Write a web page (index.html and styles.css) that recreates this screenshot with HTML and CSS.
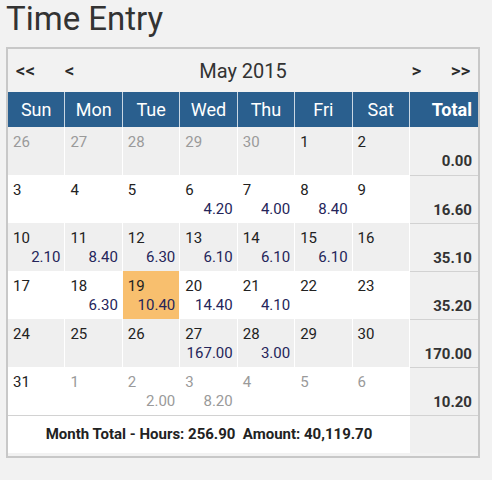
FILE: index.html
```html
<!DOCTYPE html>
<html>
<head>
<meta charset="utf-8">
<link rel="stylesheet" href="styles.css">
</head>
<body>
<h1 class="title">Time Entry</h1>
<div class="cal">
  <div class="nav">
    <span class="nav-btn nav-far">&lt;&lt;</span>
    <span class="nav-btn nav-near">&lt;</span>
    <span class="month">May 2015</span>
    <span class="nav-btn nav-near">&gt;</span>
    <span class="nav-btn nav-far">&gt;&gt;</span>
  </div>
  <div class="grid">
    <div class="hd">Sun</div><div class="hd">Mon</div><div class="hd">Tue</div><div class="hd">Wed</div><div class="hd">Thu</div><div class="hd">Fri</div><div class="hd">Sat</div><div class="hd hd-total">Total</div>

    <div class="cell gray other"><span class="d">26</span></div>
    <div class="cell gray other"><span class="d">27</span></div>
    <div class="cell gray other"><span class="d">28</span></div>
    <div class="cell gray other"><span class="d">29</span></div>
    <div class="cell gray other"><span class="d">30</span></div>
    <div class="cell gray"><span class="d">1</span></div>
    <div class="cell gray"><span class="d">2</span></div>
    <div class="tot first">0.00</div>

    <div class="cell"><span class="d">3</span></div>
    <div class="cell"><span class="d">4</span></div>
    <div class="cell"><span class="d">5</span></div>
    <div class="cell"><span class="d">6</span><span class="h">4.20</span></div>
    <div class="cell"><span class="d">7</span><span class="h">4.00</span></div>
    <div class="cell"><span class="d">8</span><span class="h">8.40</span></div>
    <div class="cell"><span class="d">9</span></div>
    <div class="tot">16.60</div>

    <div class="cell gray"><span class="d">10</span><span class="h">2.10</span></div>
    <div class="cell gray"><span class="d">11</span><span class="h">8.40</span></div>
    <div class="cell gray"><span class="d">12</span><span class="h">6.30</span></div>
    <div class="cell gray"><span class="d">13</span><span class="h">6.10</span></div>
    <div class="cell gray"><span class="d">14</span><span class="h">6.10</span></div>
    <div class="cell gray"><span class="d">15</span><span class="h">6.10</span></div>
    <div class="cell gray"><span class="d">16</span></div>
    <div class="tot">35.10</div>

    <div class="cell"><span class="d">17</span></div>
    <div class="cell"><span class="d">18</span><span class="h">6.30</span></div>
    <div class="cell today"><span class="d">19</span><span class="h">10.40</span></div>
    <div class="cell"><span class="d">20</span><span class="h">14.40</span></div>
    <div class="cell"><span class="d">21</span><span class="h">4.10</span></div>
    <div class="cell"><span class="d">22</span></div>
    <div class="cell"><span class="d">23</span></div>
    <div class="tot">35.20</div>

    <div class="cell gray"><span class="d">24</span></div>
    <div class="cell gray"><span class="d">25</span></div>
    <div class="cell gray"><span class="d">26</span></div>
    <div class="cell gray"><span class="d">27</span><span class="h">167.00</span></div>
    <div class="cell gray"><span class="d">28</span><span class="h">3.00</span></div>
    <div class="cell gray"><span class="d">29</span></div>
    <div class="cell gray"><span class="d">30</span></div>
    <div class="tot">170.00</div>

    <div class="cell"><span class="d">31</span></div>
    <div class="cell other"><span class="d">1</span></div>
    <div class="cell other"><span class="d">2</span><span class="h">2.00</span></div>
    <div class="cell other"><span class="d">3</span><span class="h">8.20</span></div>
    <div class="cell other"><span class="d">4</span></div>
    <div class="cell other"><span class="d">5</span></div>
    <div class="cell other"><span class="d">6</span></div>
    <div class="tot">10.20</div>

    <div class="foot">Month Total - Hours: 256.90&nbsp;&nbsp;Amount: 40,119.70</div>
    <div class="foot-tot"></div>
  </div>
</div>
</body>
</html>
```
FILE: styles.css
```css
html, body {
  margin: 0;
  background: #f2f2f2;
}
body {
  padding: 0 6px;
  font-family: Roboto, "Liberation Sans", sans-serif;
  color: #222;
}
.title {
  margin: 0;
  font-size: 33px;
  line-height: 38px;
  font-weight: 400;
  color: #333;
}
.cal {
  margin-top: 9px;
  width: 470px;
  border: 2px solid #c8c8c8;
  padding-bottom: 3px;
  background: #f2f2f2;
}
.nav {
  display: flex;
  align-items: center;
  height: 43px;
  color: #2a2a2a;
}
.nav-btn {
  text-align: center;
  font-size: 19px;
  font-weight: 500;
}
.nav-far { width: 35px; }
.nav-near { width: 53px; }
.month {
  flex: 1;
  text-align: center;
  font-size: 20px;
  color: #333;
}
.grid {
  display: grid;
  grid-template-columns: repeat(7, 1fr) 68px;
  grid-template-rows: 35px repeat(6, 48px) 38px;
}
.hd {
  background: #2a5f8e;
  color: #fff;
  font-size: 18px;
  line-height: 35px;
  text-align: center;
  border-right: 1px solid rgba(255,255,255,0.75);
}
.hd-total {
  border-right: 0;
  text-align: right;
  padding-right: 6px;
  font-weight: 700;
}
.cell {
  display: flex;
  flex-direction: column;
  padding: 6px 4px 0 5px;
  background: #fff;
  border-right: 1px solid #fff;
  font-size: 15px;
  line-height: 19px;
}
.cell.gray { background: #efefef; }
.cell.today { background: #f8bf6e; }
.d { color: #222; }
.h {
  align-self: flex-end;
  color: #25255a;
}
.other .d, .other .h { color: #9a9a9a; }
.tot {
  background: #f0f0f0;
  border-top: 1px solid #d2d2d2;
  text-align: right;
  padding: 25px 6px 0 0;
  font-size: 15px;
  line-height: 19px;
  font-weight: 700;
  color: #333;
}
.tot.first { border-top: 0; }
.foot {
  grid-column: 1 / 8;
  background: #fff;
  border-top: 1px solid #d2d2d2;
  text-align: center;
  font-size: 15px;
  font-weight: 700;
  line-height: 37px;
  color: #222;
}
.foot-tot {
  background: #f0f0f0;
  border-top: 1px solid #d2d2d2;
}
```
